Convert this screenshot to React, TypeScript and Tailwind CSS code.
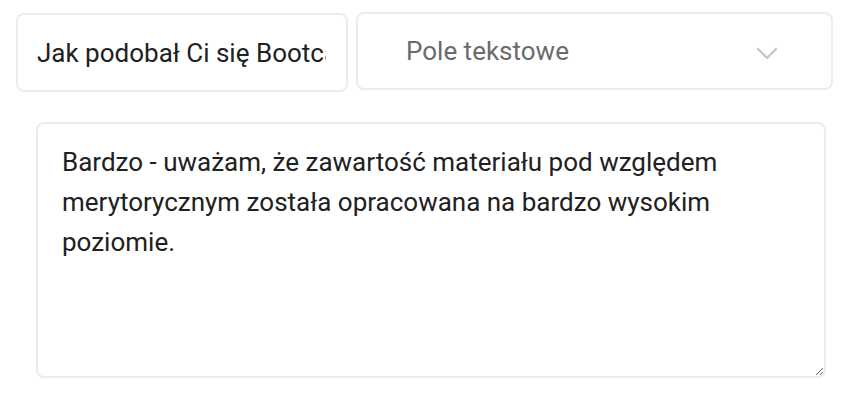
import React from 'react';

const font = { fontFamily: 'Roboto, "Noto Sans", sans-serif' };

export default function App() {
  return (
    <div className="w-[859px] h-[402px] bg-white" style={font}>
      <div className="flex items-start gap-[8px] pl-[16px] pt-[12px]">
        <input
          readOnly
          value="Jak podobał Ci się Bootcamp?"
          className="mt-[1px] w-[332px] h-[79px] rounded-[8px] border-2 border-[#ececec] bg-white pl-[19px] pr-[20px] text-[26px] text-[#212121] outline-none"
        />
        <div className="w-[477px] h-[78px] rounded-[8px] border-2 border-[#ececec] bg-white flex items-center pl-[48px] pr-[53px]">
          <span className="flex-1 text-[26px] text-[#6b6b6b]">Pole tekstowe</span>
          <svg width="22" height="14" viewBox="0 0 22 14" fill="none" className="mt-[4px]">
            <path d="M2 3l9 9 9-9" stroke="#c4c4c4" strokeWidth="2.2" strokeLinecap="round" strokeLinejoin="round" />
          </svg>
        </div>
      </div>
      <div className="pl-[36px] pt-[30px]">
        <textarea
          readOnly
          value="Bardzo - uważam, że zawartość materiału pod względem merytorycznym została opracowana na bardzo wysokim poziomie."
          className="block w-[790px] h-[256px] rounded-[8px] border-2 border-[#ececec] bg-white pl-[24px] pr-[60px] pt-[18px] text-[26px] leading-[40px] text-[#212121] outline-none resize"
        />
      </div>
    </div>
  );
}
